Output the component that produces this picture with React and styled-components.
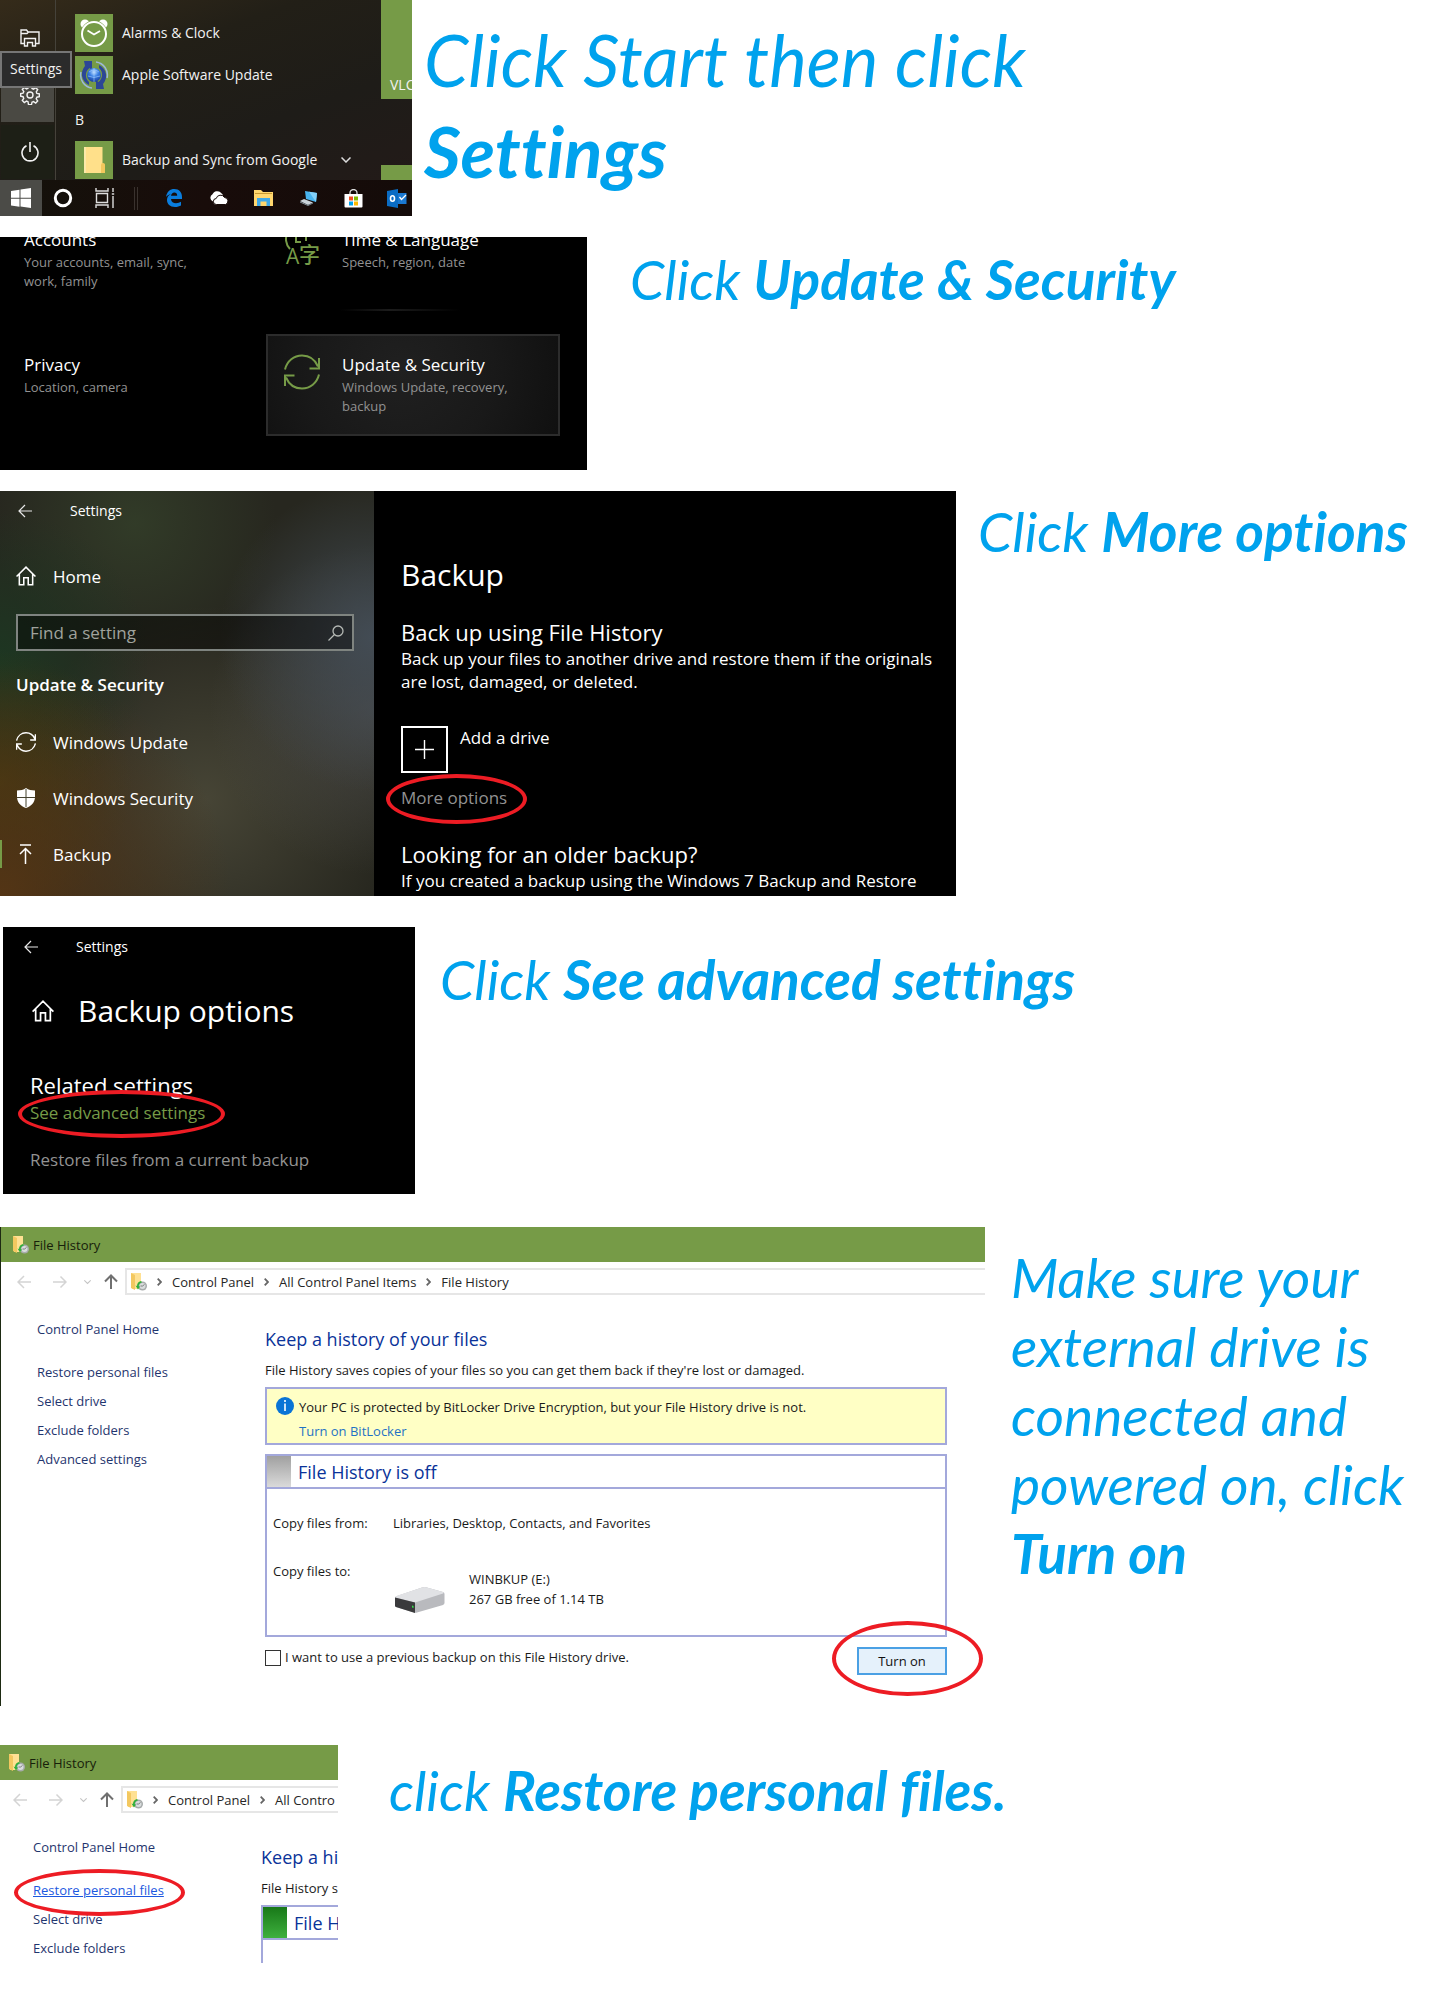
import React from 'react'
import styled, { createGlobalStyle, css } from 'styled-components'

const palette = {
    caption: '#00a2ed',
    ring: '#ed1c24',
    green: '#769b47',
    link: '#1f356e',
    heading: '#0a3399',
    frame: '#a3a8db',
    muted: '#929292',
}

const fonts = {
    ui: "'Open Sans', 'Noto Sans', sans-serif",
    caption: "Lato, 'Open Sans', sans-serif",
}

const GlobalStyle = createGlobalStyle`
    * {
        box-sizing: border-box;
    }
    body {
        margin: 0;
        background: #fff;
        font-family: ${fonts.ui};
    }
    h1, h2, h3, p, ul {
        margin: 0;
        padding: 0;
        font-weight: 400;
    }
    ul {
        list-style: none;
    }
    a {
        color: inherit;
        text-decoration: none;
    }
    button {
        font: inherit;
        color: inherit;
        background: none;
        border: 0;
        padding: 0;
    }
    svg {
        display: block;
        flex: none;
    }
`

/* ---------- page ---------- */

const Step = styled.section`
    display: grid;
    grid-template-columns: minmax(0, ${p => p.$shot}fr) minmax(0, ${p => 1444 - p.$shot}fr);
    align-items: start;
    margin-top: ${p => p.$gap || 0}px;
`
const Caption = styled.h2`
    padding: ${p => p.$top}px 0 0 ${p => p.$indent}px;
    color: ${palette.caption};
    font-family: ${fonts.caption};
    font-style: italic;
    font-size: ${p => (p.$large ? 71 : 55)}px;
    line-height: ${p => (p.$large ? 91 : 69)}px;
    font-variant-ligatures: none;

    b {
        font-weight: 700;
    }
`
const Circled = styled.span`
    position: relative;
    display: inline-block;
`
const Ring = styled.span`
    position: absolute;
    inset: ${p => p.$inset};
    border: 4px solid ${palette.ring};
    border-radius: 50%;
    pointer-events: none;
`

/* ---------- start menu ---------- */

const StartMenu = styled.div`
    overflow: hidden;
    color: #f2f2f2;
    font-size: 14px;
    line-height: 20px;
    white-space: nowrap;
    background: linear-gradient(160deg, #352b1a 0%, #221f17 30%, #1e1c18 60%, #241a18 100%);
`
const StartBody = styled.div`
    display: flex;
`
const Rail = styled.div`
    position: relative;
    width: 56px;
    padding-top: 11px;
    display: flex;
    flex-direction: column;
    gap: 3px;
    border-right: 1px solid #45423a;
`
const RailButton = styled.button`
    height: 54px;
    margin: 0 1px;
    display: flex;
    align-items: center;
    justify-content: center;
    padding-left: 5px;
    background: ${p => (p.$hover ? '#4a4943' : p.$dark ? '#1d1f16' : 'transparent')};
`
const Tooltip = styled.div`
    position: absolute;
    top: 51px;
    left: 0;
    width: 72px;
    padding: 6px 0 7px;
    text-align: center;
    background: #2b2b2b;
    border: 2px solid #767676;
`
const AppList = styled.ul`
    flex: 1;
    padding: 14px 0 1px 19px;
    display: flex;
    flex-direction: column;
    gap: 4px;
`
const AppRow = styled.li`
    display: flex;
    align-items: center;
    height: 38px;

    svg:last-child:not(:first-child) {
        margin-left: auto;
        margin-right: 30px;
    }
`
const Letter = styled.li`
    height: 39px;
    padding-top: 12px;
`
const AppTile = styled.span`
    width: 38px;
    height: 38px;
    margin-right: 9px;
    display: flex;
    align-items: center;
    justify-content: center;
    background: ${palette.green};
`
const LiveTiles = styled.div`
    width: 31px;
    display: flex;
    flex-direction: column;
    justify-content: space-between;
`
const LiveTile = styled.div`
    height: ${p => p.$height}px;
    padding: 0 0 4px 9px;
    display: flex;
    align-items: flex-end;
    overflow: hidden;
    background: ${palette.green};
`
const Taskbar = styled.div`
    height: 36px;
    display: flex;
    align-items: center;
    background: linear-gradient(90deg, #14120b, #180c0a 50%, #140b09);
`
const TaskButton = styled.button`
    flex: 0 0 ${p => p.$width}px;
    height: 36px;
    display: flex;
    align-items: center;
    justify-content: center;
    background: ${p => (p.$active ? '#4b4b47' : 'transparent')};
`
const TaskDivider = styled.span`
    flex: none;
    width: 4px;
    height: 23px;
    margin: 0 14px 0 8px;
    border: solid #3a322e;
    border-width: 0 1px;
`

/* ---------- settings home ---------- */

const SettingsHome = styled.div`
    display: grid;
    grid-template-columns: minmax(0, 266fr) minmax(0, 294fr);
    row-gap: 23px;
    padding: 0 27px 34px 0;
    overflow: hidden;
    background: #000;

    /* first row is scrolled halfway out of view */
    & > :nth-child(-n + 2) {
        margin-top: -28px;
    }
`
const Category = styled.a`
    display: flex;
    gap: 22px;
    min-height: 102px;
    padding: 18px 16px 18px ${p => (p.$plain ? 22 : 16)}px;
    border: 2px solid transparent;

    ${p => p.$trace && css`
        border-image: linear-gradient(90deg, transparent 25%, #1c1c1c 42%, transparent 66%) 2;
    `}
    ${p => p.$hover && css`
        border-color: #2c2c2c;
        background: radial-gradient(circle at 46% 35%, #202020, #191919 55%, #101010);
    `}
`
const CategoryTitle = styled.h3`
    color: #fff;
    font-size: 17px;
    font-weight: 500;
    line-height: 22px;
    white-space: nowrap;
`
const CategoryText = styled.p`
    max-width: 182px;
    margin-top: 2px;
    color: ${palette.muted};
    font-size: 13px;
    line-height: 19px;
`

/* ---------- settings windows ---------- */

const SettingsWindow = styled.div`
    display: grid;
    grid-template-columns: ${p => (p.$split ? 'minmax(0, 374fr) minmax(0, 582fr)' : 'minmax(0, 1fr)')};
    margin-left: ${p => p.$offset || 0}px;
    overflow: hidden;
    color: #fff;
    font-size: 17px;
    line-height: 23px;
    background: #000;
`
const Sidebar = styled.div`
    padding: 10px 20px 14px 16px;
    background:
        radial-gradient(circle at 0% 100%, rgba(88, 54, 20, .9), transparent 42%),
        radial-gradient(circle at 0% 72%, rgba(74, 60, 12, .7), transparent 28%),
        radial-gradient(circle at 0% 42%, rgba(28, 56, 34, .9), transparent 34%),
        radial-gradient(circle at 100% 36%, rgba(68, 78, 88, .9), transparent 34%),
        radial-gradient(circle at 100% 54%, rgba(80, 80, 80, .7), transparent 38%),
        radial-gradient(circle at 36% 8%, rgba(52, 64, 42, .8), transparent 32%),
        radial-gradient(circle at 55% 76%, rgba(74, 72, 56, .9), transparent 52%),
        #27271f;
`
const TitleRow = styled.div`
    display: flex;
    align-items: center;
    gap: 38px;
    padding-left: ${p => p.$indent}px;
    font-size: 14px;
    line-height: 20px;
`
const NavLink = styled.a`
    position: relative;
    display: flex;
    align-items: center;
    gap: 17px;
    height: 56px;

    &[aria-current]::before {
        content: '';
        position: absolute;
        left: -16px;
        width: 2px;
        height: 28px;
        background: ${palette.green};
    }
`
const HomeLink = styled(NavLink)`
    height: 24px;
    margin-top: 43px;
`
const SearchBox = styled.label`
    display: flex;
    align-items: center;
    height: 37px;
    margin-top: 26px;
    padding: 0 8px 0 12px;
    background: rgba(0, 0, 0, .42);
    border: 2px solid #7f8480;

    input {
        flex: 1;
        min-width: 0;
        padding: 0;
        color: #fff;
        font: inherit;
        background: none;
        border: 0;
        outline: 0;
    }
    input::placeholder {
        color: #a0a39d;
        opacity: 1;
    }
`
const SidebarHeading = styled.h3`
    margin: 22px 0 17px;
    font-size: 17px;
    font-weight: 600;
    line-height: 24px;
`
const BackupPane = styled.div`
    padding: 62px 24px 2px 27px;
    white-space: nowrap;
`
const PageTitle = styled.h1`
    font-size: 30px;
    font-weight: 400;
    line-height: 44px;
`
const SectionTitle = styled.h2`
    margin-top: ${p => p.$space}px;
    font-size: 22px;
    line-height: 28px;
`
const PaneText = styled.p`
    margin-top: 1px;
`
const AddDrive = styled.button`
    display: flex;
    gap: 12px;
    margin: 33px 0 13px;
    line-height: 23px;
`
const AddBox = styled.span`
    width: 47px;
    height: 47px;
    display: flex;
    align-items: center;
    justify-content: center;
    border: 2px solid #fff;
`
const PaneLink = styled.a`
    color: ${p => (p.$accent ? palette.green : palette.muted)};
`
const OptionsPane = styled.div`
    padding: 10px 0 23px;
`
const OptionsTitle = styled.div`
    display: flex;
    align-items: center;
    gap: 24px;
    margin-top: 32px;
    padding-left: 29px;
`
const OptionsBody = styled.div`
    display: flex;
    flex-direction: column;
    align-items: flex-start;
    gap: 2px;
    padding-left: 27px;

    & > :last-child {
        margin-top: 22px;
    }
`

/* ---------- file history ---------- */

const Window = styled.div`
    overflow: hidden;
    color: #1a1a1a;
    font-size: 13px;
    line-height: 20px;
    white-space: nowrap;
    background: #fff;
    border-left: ${p => (p.$edge ? '1px solid #1d2a12' : '0')};
    padding-bottom: ${p => p.$bottom || 0}px;
`
const TitleBar = styled.div`
    display: flex;
    align-items: center;
    gap: 4px;
    height: 35px;
    padding-left: ${p => p.$inset + 9}px;
    color: #16200a;
    background: ${palette.green};
`
const AddressRow = styled.div`
    display: flex;
    align-items: center;
    padding: 6px 0 0 ${p => p.$inset + 2}px;
`
const NavButton = styled.button`
    flex: 0 0 ${p => p.$width}px;
    display: flex;
    justify-content: center;
`
const AddressBar = styled.div`
    flex: 1;
    display: flex;
    align-items: center;
    height: 27px;
    padding-left: 4px;
    overflow: hidden;
    border: 2px solid #e6e6e6;
    border-right: 0;
`
const Crumb = styled.a`
    display: flex;
    align-items: center;
    gap: 10px;
    margin-left: 10px;
    color: #262626;
`
const Columns = styled.div`
    display: flex;
    padding-left: ${p => p.$inset}px;
`
const TaskList = styled.ul`
    flex: 0 0 261px;
    padding: 24px 0 0 33px;
    display: flex;
    flex-direction: column;
    gap: 9px;
    color: ${palette.link};

    li:first-child {
        margin-bottom: 14px;
    }
`
const ActiveTask = styled.a`
    color: #1c58e0;
    text-decoration: underline;
`
const Content = styled.div`
    flex: 1;
    min-width: 0;
    padding: 31px ${p => p.$right}px 0 0;
`
const ContentTitle = styled.h1`
    color: ${palette.heading};
    font-size: 18px;
    line-height: 26px;
`
const Intro = styled.p`
    margin: 8px 0 7px;
`
const Notice = styled.div`
    display: flex;
    gap: 5px;
    margin-bottom: 9px;
    padding: 8px 9px 2px;
    background: #ffffc5;
    border: 2px solid ${palette.frame};

    a {
        display: block;
        margin-top: 4px;
        color: #1f72c4;
    }
`
const StatusBox = styled.div`
    border: 2px solid ${palette.frame};
    ${p => p.$cropped && css`
        height: 58px;
        border-width: 2px 0 0 2px;
    `}
`
const StatusHeader = styled.div`
    display: flex;
    align-items: center;
    gap: 7px;
    height: 33px;
    border-bottom: 2px solid ${palette.frame};

    &::before {
        content: '';
        flex: none;
        width: 24px;
        height: 31px;
        background: ${p => (p.$on ? 'linear-gradient(#187818, #3eb03e)' : 'linear-gradient(#a0a0a0, #dadada)')};
    }
`
const StatusDetails = styled.div`
    display: grid;
    grid-template-columns: 120px 1fr;
    row-gap: 28px;
    padding: 24px 6px 26px;
`
const Target = styled.div`
    display: flex;
    gap: 24px;
    padding-top: 8px;

    svg {
        margin: 18px 0 -4px 2px;
    }
`
const ActionRow = styled.div`
    display: flex;
    justify-content: space-between;
    align-items: flex-start;
    margin-top: 10px;
`
const CheckLabel = styled.label`
    display: flex;
    align-items: center;
    gap: 4px;

    input {
        appearance: none;
        width: 16px;
        height: 16px;
        margin: 2px 0 0;
        background: #fff;
        border: 1px solid #333;
    }
`
const TurnOn = styled.button`
    display: block;
    width: 90px;
    height: 28px;
    color: #111;
    background: #e5f1fb;
    border: 2px solid #4ba0e4;
`

/* ---------- icons ---------- */

const Line = ({ w = 20, h = w, box = `0 0 ${w} ${h}`, stroke = 1.5, color = 'currentColor', children }) => (
    <svg width={w} height={h} viewBox={box} fill="none" stroke={color} strokeWidth={stroke} aria-hidden="true">
        {children}
    </svg>
)

const ExplorerIcon = () => (
    <Line w={20} h={18} stroke={1.4}>
        <path d="M4 14.500H1V1h5.500l1.500 2H19v11.500h-3M1 4.500h6l1.500-1.500M4.500 17V9.500h11V17h-3v-3.500h-5V17z" />
    </Line>
)
const GearIcon = () => (
    <Line w={20} stroke={1.4}>
        <circle cx="10" cy="10" r="3" />
        <path d="M8.500 1h3l.5 2.500 1.500.7 2.200-1.500 2 2-1.400 2.200.6 1.500 2.400.5v2.800l-2.400.5-.7 1.600 1.500 2.200-2 2-2.200-1.400-1.500.6-.5 2.400h-3L8 16.700l-1.500-.6-2.200 1.400-2-2 1.400-2.200-.6-1.600L.700 11.200V8.600L3.100 8.100l.7-1.500L2.300 4.400l2-2 2.200 1.500L8 3.200z" />
    </Line>
)
const PowerIcon = () => (
    <Line w={18} h={20} stroke={1.6}>
        <path d="M9 0v10M5.500 3.700a8 8 0 1 0 7 0" />
    </Line>
)
const ClockIcon = () => (
    <svg width="28" height="28" viewBox="0 0 28 28" aria-hidden="true">
        <circle cx="5" cy="5" r="4.500" fill="#fff" />
        <circle cx="23" cy="5" r="4.500" fill="#fff" />
        <circle cx="14" cy="15" r="12" fill={palette.green} stroke={palette.green} strokeWidth="3" />
        <circle cx="14" cy="15" r="12" fill="none" stroke="#fff" strokeWidth="2" />
        <path d="M7.500 11.500L14 15.500l6-3.500" fill="none" stroke="#fff" strokeWidth="1.800" />
    </svg>
)
const AppleUpdateIcon = () => (
    <svg width="30" height="30" viewBox="0 0 30 30" aria-hidden="true">
        <defs>
            <radialGradient id="globe" cx=".5" cy=".3" r=".7">
                <stop offset="0" stopColor="#c4e2ff" />
                <stop offset=".45" stopColor="#3a80e4" />
                <stop offset="1" stopColor="#1a3f9c" />
            </radialGradient>
        </defs>
        <path d="M10 25A12 12 0 0 1 6 6L5 1h8v9l-2.500-2a9 9 0 0 0-.5 14z" fill="#2c4696" />
        <path d="M20 5a12 12 0 0 1 4 19l1 5h-8v-9l2.500 2A9 9 0 0 0 20 8z" fill="#2c4696" />
        <path d="M13 28A13 13 0 0 1 2 12M17 2a13 13 0 0 1 11 16" fill="none" stroke="#9db8d8" strokeWidth="1.500" />
        <circle cx="15" cy="15" r="7" fill="url(#globe)" />
        <path d="M10 12q5-4 10 0M9 16q6 3 12 0M15 8v14" fill="none" stroke="#a8d0ff" strokeWidth=".600" />
    </svg>
)
const FolderIcon = () => (
    <svg width="21" height="26" viewBox="0 0 21 26" aria-hidden="true">
        <path d="M0 0h18.500v16l2.500 2v8H0z" fill="#ffe08a" />
        <path d="M0 0h2v26H0z" fill="#fbe9a8" />
        <path d="M17 26v-8q0-2 2-2t2 2v8z" fill="#f2c75c" />
    </svg>
)
const ChevronDown = ({ w = 10, color = '#ddd' }) => (
    <Line w={w} h={6} box="0 0 10 6" color={color}><path d="M.5.5L5 5 9.500.5" /></Line>
)
const WindowsIcon = () => (
    <svg width="20" height="20" viewBox="0 0 20 20" fill="#fff" aria-hidden="true">
        <path d="M0 3l8.500-1.300v8H0zM9.500 1.500L20 0v9.700H9.500zM0 10.700h8.500v8L0 17.400zM9.500 10.700H20V20l-10.500-1.400z" />
    </svg>
)
const CortanaIcon = () => <Line w={20} stroke={3} color="#fff"><circle cx="10" cy="10" r="7.700" /></Line>
const TaskViewIcon = () => (
    <Line w={20} h={20} stroke={1.4} color="#ddd">
        <path d="M1 0v3h12V0M1 20v-3h12v3M1.500 5.500h11v9h-11zM18 0v4M18 8v12M16.800 6h2.400" />
    </Line>
)
const EdgeIcon = () => (
    <svg width="18" height="18" viewBox="0 0 18 18" aria-hidden="true">
        <path d="M1 8C2 2.500 5 0 9.300 0 14.200 0 17 3.400 17 8v2H6c.2 3 2.400 4.200 5 4.200 2 0 3.600-.5 5-1.400v3.700c-1.500.9-3.600 1.500-6 1.500-5 0-8-3-8-7 0-2.800 1.500-5 4-6.300C3.600 5.500 2 6.500 1 8zm5-1.200h6.200C12.200 4.600 11 3.500 9.300 3.500S6.300 4.800 6 6.800z" fill="#0a7ddd" />
    </svg>
)
const CloudIcon = () => (
    <svg width="20" height="14" viewBox="0 0 20 14" aria-hidden="true">
        <path d="M4 10.500a4 4 0 0 1-.5-7.300A5 5 0 0 1 12 2a4 4 0 0 1 2 2.500z" fill="#fff" />
        <path d="M7.500 13.500a3 3 0 0 1-.3-6A4.500 4.500 0 0 1 15.500 6.500a3.600 3.600 0 0 1 1 7z" fill="#fff" stroke="#180c0a" strokeWidth="1" />
    </svg>
)
const TaskFolderIcon = () => (
    <svg width="19" height="16" viewBox="0 0 19 16" aria-hidden="true">
        <path d="M0 0h7l2 2h10v14H0z" fill="#ffd76e" />
        <path d="M1 3.500h17" stroke="#b98a25" strokeWidth=".800" />
        <path d="M3 16V8h13v8h-3.500v-4.500h-6V16z" fill="#3fa9e8" />
    </svg>
)
const ComputerIcon = () => (
    <svg width="19" height="17" viewBox="0 0 19 17" aria-hidden="true">
        <path d="M6 1l12 2-1 9-10-3z" fill="#48b4f0" />
        <path d="M10 1.700L18 3l-1 9z" fill="#83d0fa" />
        <path d="M1 11l4-2 9 3.500L9 15z" fill="#c9d3da" />
        <path d="M1 12l8 3.500 5-2.500" fill="none" stroke="#7c8b95" />
    </svg>
)
const StoreIcon = () => (
    <svg width="19" height="19" viewBox="0 0 19 19" aria-hidden="true">
        <path d="M6 6V4a3.500 3.500 0 0 1 7 0v2" fill="none" stroke="#ddd" strokeWidth="1.300" />
        <path d="M.5 5h18v12.500q0 1-1 1h-16q-1 0-1-1z" fill="#fff" />
        <path d="M5 7.500h4v4H5z" fill="#f04e23" />
        <path d="M10 7.500h4v4h-4z" fill="#7fba00" />
        <path d="M5 12.500h4v4H5z" fill="#00a4ef" />
        <path d="M10 12.500h4v4h-4z" fill="#ffb900" />
    </svg>
)
const OutlookIcon = () => (
    <svg width="20" height="19" viewBox="0 0 20 19" aria-hidden="true">
        <path d="M10 4h9.500v11H10z" fill="#1a78d0" />
        <path d="M12.500 8l2 2.500L19 6" fill="none" stroke="#fff" strokeWidth="1.300" />
        <path d="M0 2l11-2v19L0 17z" fill="#0a6cc4" />
        <ellipse cx="5.500" cy="9.500" rx="2" ry="2.700" fill="none" stroke="#fff" strokeWidth="1.600" />
    </svg>
)
const LanguageIcon = () => (
    <svg width="36" height="36" viewBox="0 0 36 36" fill={palette.green} aria-hidden="true">
        <path d="M6 20A14 14 0 0 1 4 3M12 7v6h5M22 8v4" fill="none" stroke={palette.green} strokeWidth="2" />
        <text x="2" y="35" fontSize="21" fontWeight="500" fontFamily="Open Sans, sans-serif">A</text>
        <text x="15" y="33" fontSize="21" fontWeight="500" fontFamily="Noto Sans CJK SC, sans-serif">字</text>
    </svg>
)
const SyncIcon = ({ size = 36, color = palette.green }) => (
    <Line w={size} box="0 0 36 36" stroke={size > 30 ? 2 : 2.6} color={color}>
        <path d="M1 15.500C3 7 10 1.500 18 1.500c7 0 13 4 16 11M35 4v10.500H25.500M35 20.500C33 29 26 34.500 18 34.500c-7 0-13-4-16-11M1 32V21.500h9.500" />
    </Line>
)
const BackIcon = ({ color = '#e8e8e8', stroke = 1.2 }) => (
    <Line w={14} h={14} color={color} stroke={stroke}><path d="M14 7H1M7 1L1 7l6 6" /></Line>
)
const ForwardIcon = () => (
    <Line w={14} h={14} color="#d4d4d4"><path d="M0 7h13M7.500 1.500L13 7l-5.500 5.500" /></Line>
)
const UpIcon = () => (
    <Line w={14} h={15} color="#707070" stroke={2}><path d="M7 15V1.500M1 7.500l6-6 6 6" /></Line>
)
const HomeIcon = ({ size = 18 }) => (
    <Line w={size} box="0 0 18 18" stroke={1.4}>
        <path d="M.5 9.500L9 1l8.500 8.500M3 7.500v9.300h4v-6.300h4v6.300h4V7.500" />
    </Line>
)
const SearchIcon = () => (
    <Line w={16} color="#b5b9b5" stroke={1.3}><circle cx="10" cy="6" r="5" /><path d="M6.500 9.500L.5 15.500" /></Line>
)
const ShieldIcon = () => (
    <svg width="20" height="20" viewBox="0 0 20 20" aria-hidden="true">
        <path d="M10 0c2.500 1.800 5.500 2.500 9 2.500V9c0 5-3.500 9-9 11C4.500 18 1 14 1 9V2.500C4.500 2.500 7.500 1.800 10 0z" fill="#fff" />
        <path d="M10 1v18M1 9.500h18" stroke="#45422f" strokeWidth="1" />
    </svg>
)
const UploadIcon = () => (
    <Line w={20} h={20}><path d="M4 1h11M9.500 20V5M4 10l5.500-5.500L15 10" /></Line>
)
const PlusIcon = () => <Line w={19} stroke={1.4}><path d="M9.500 0v19M0 9.500h19" /></Line>
const HistoryIcon = () => (
    <svg width="16" height="18" viewBox="0 0 16 18" aria-hidden="true">
        <path d="M0 0h10v8l2 3v5H1z" fill="#ffe193" />
        <path d="M0 0l4 2v15l-4-2z" fill="#f3c860" />
        <circle cx="11.500" cy="13" r="4.500" fill="#a7abab" />
        <circle cx="11.500" cy="13" r="3" fill="#d9dddd" />
        <path d="M11.500 13l2-1.500M11.500 13h-2" stroke="#666" strokeWidth=".800" />
        <path d="M10 8q-4 1-4 5l-1.500-.5L7 16.500l2-3-1.300-.3q0-3 3.300-4z" fill="#2fae3c" />
    </svg>
)
const ChevronRight = () => <Line w={5} h={8} color="#666" stroke={1.8}><path d="M.7.7L4 4 .7 7.300" /></Line>
const InfoIcon = () => (
    <svg width="18" height="18" viewBox="0 0 18 18" aria-hidden="true">
        <circle cx="9" cy="9" r="9" fill="#0a74d6" />
        <path d="M9 3v2M9 6.500V14" stroke="#fff" strokeWidth="1.600" />
    </svg>
)
const DriveIcon = () => (
    <svg width="50" height="26" viewBox="0 0 50 26" aria-hidden="true">
        <path d="M0 11q0-1 2-2L27 .5q2-.8 4-.3L48 5q1.500.5 1.500 2v9q0 1-1.500 2L22 25.500q-1.500.5-3 0L1 20q-1-.5-1-1.500z" fill="#b9babe" />
        <path d="M0 10.500q0-1 2-1.700L27 .5q2-.8 4-.3L48 5q1.500.8 0 1.500L20 15.500z" fill="#e1e2e5" />
        <path d="M0 10.500l20 5V26L1 20q-1-.5-1-1.500z" fill="#3a3a3c" />
        <path d="M17 18.500l1.500.4v2l-1.500-.4z" fill="#35e04a" />
    </svg>
)

/* ---------- sections ---------- */

const StartMenuShot = () => (
    <StartMenu>
        <StartBody>
            <Rail>
                <RailButton aria-label="File Explorer"><ExplorerIcon /></RailButton>
                <RailButton aria-label="Settings" $hover><GearIcon /></RailButton>
                <RailButton aria-label="Power" $dark><PowerIcon /></RailButton>
                <Tooltip>Settings</Tooltip>
            </Rail>
            <AppList>
                <AppRow><AppTile><ClockIcon /></AppTile>Alarms &amp; Clock</AppRow>
                <AppRow><AppTile><AppleUpdateIcon /></AppTile>Apple Software Update</AppRow>
                <Letter>B</Letter>
                <AppRow><AppTile><FolderIcon /></AppTile>Backup and Sync from Google<ChevronDown /></AppRow>
            </AppList>
            <LiveTiles>
                <LiveTile $height={99}>VLC</LiveTile>
                <LiveTile $height={15} />
            </LiveTiles>
        </StartBody>
        <Taskbar>
            <TaskButton $width={42} $active aria-label="Start"><WindowsIcon /></TaskButton>
            <TaskButton $width={42} aria-label="Cortana"><CortanaIcon /></TaskButton>
            <TaskButton $width={42} aria-label="Task View"><TaskViewIcon /></TaskButton>
            <TaskDivider />
            <TaskButton $width={44} aria-label="Edge"><EdgeIcon /></TaskButton>
            <TaskButton $width={45} aria-label="OneDrive"><CloudIcon /></TaskButton>
            <TaskButton $width={45} aria-label="Files"><TaskFolderIcon /></TaskButton>
            <TaskButton $width={45} aria-label="Computer"><ComputerIcon /></TaskButton>
            <TaskButton $width={44} aria-label="Store"><StoreIcon /></TaskButton>
            <TaskButton $width={44} aria-label="Outlook"><OutlookIcon /></TaskButton>
        </Taskbar>
    </StartMenu>
)

const CategoryItem = ({ icon, title, text, ...rest }) => (
    <Category href="#" {...rest}>
        {icon}
        <div>
            <CategoryTitle>{title}</CategoryTitle>
            <CategoryText>{text}</CategoryText>
        </div>
    </Category>
)

const SettingsHomeShot = () => (
    <SettingsHome>
        <CategoryItem $plain title="Accounts" text="Your accounts, email, sync, work, family" />
        <CategoryItem $trace icon={<LanguageIcon />} title="Time & Language" text="Speech, region, date" />
        <CategoryItem $plain title="Privacy" text="Location, camera" />
        <CategoryItem $hover icon={<SyncIcon />} title="Update & Security" text="Windows Update, recovery, backup" />
    </SettingsHome>
)

const BackupShot = () => (
    <SettingsWindow $split>
        <Sidebar>
            <TitleRow $indent={2}><BackIcon />Settings</TitleRow>
            <HomeLink href="#"><HomeIcon size={20} />Home</HomeLink>
            <SearchBox>
                <input type="text" placeholder="Find a setting" aria-label="Find a setting" />
                <SearchIcon />
            </SearchBox>
            <SidebarHeading>Update &amp; Security</SidebarHeading>
            <NavLink href="#"><SyncIcon size={20} color="#fff" />Windows Update</NavLink>
            <NavLink href="#"><ShieldIcon />Windows Security</NavLink>
            <NavLink href="#" aria-current="page"><UploadIcon />Backup</NavLink>
        </Sidebar>
        <BackupPane>
            <PageTitle>Backup</PageTitle>
            <SectionTitle $space={21}>Back up using File History</SectionTitle>
            <PaneText>
                Back up your files to another drive and restore them if the originals<br />
                are lost, damaged, or deleted.
            </PaneText>
            <AddDrive><AddBox><PlusIcon /></AddBox>Add a drive</AddDrive>
            <Circled>
                <PaneLink href="#">More options</PaneLink>
                <Ring $inset="-12px -20px -15px -15px" />
            </Circled>
            <SectionTitle $space={31}>Looking for an older backup?</SectionTitle>
            <PaneText>If you created a backup using the Windows 7 Backup and Restore</PaneText>
        </BackupPane>
    </SettingsWindow>
)

const BackupOptionsShot = () => (
    <SettingsWindow $offset={3}>
        <OptionsPane>
            <TitleRow $indent={21}><BackIcon />Settings</TitleRow>
            <OptionsTitle>
                <HomeIcon size={22} />
                <PageTitle>Backup options</PageTitle>
            </OptionsTitle>
            <OptionsBody>
                <SectionTitle $space={38}>Related settings</SectionTitle>
                <Circled>
                    <PaneLink href="#" $accent>See advanced settings</PaneLink>
                    <Ring $inset="-11px -20px -14px -12px" />
                </Circled>
                <PaneLink href="#">Restore files from a current backup</PaneLink>
            </OptionsBody>
        </OptionsPane>
    </SettingsWindow>
)

const WindowTop = ({ inset, crumbs }) => (
    <>
        <TitleBar $inset={inset}><HistoryIcon />File History</TitleBar>
        <AddressRow $inset={inset}>
            <NavButton $width={36} aria-label="Back"><BackIcon color="#d4d4d4" stroke={1.5} /></NavButton>
            <NavButton $width={36} aria-label="Forward"><ForwardIcon /></NavButton>
            <NavButton $width={18} aria-label="Recent locations"><ChevronDown w={7} color="#c4c4c4" /></NavButton>
            <NavButton $width={29} aria-label="Up"><UpIcon /></NavButton>
            <AddressBar>
                <HistoryIcon />
                {crumbs.map(name => <Crumb href="#" key={name}><ChevronRight />{name}</Crumb>)}
            </AddressBar>
        </AddressRow>
    </>
)

const crumbs = ['Control Panel', 'All Control Panel Items', 'File History']

const FileHistoryShot = () => (
    <Window $edge $bottom={31}>
        <WindowTop inset={3} crumbs={crumbs} />
        <Columns $inset={3}>
            <TaskList>
                <li><a href="#">Control Panel Home</a></li>
                <li><a href="#">Restore personal files</a></li>
                <li><a href="#">Select drive</a></li>
                <li><a href="#">Exclude folders</a></li>
                <li><a href="#">Advanced settings</a></li>
            </TaskList>
            <Content $right={38}>
                <ContentTitle>Keep a history of your files</ContentTitle>
                <Intro>File History saves copies of your files so you can get them back if they're lost or damaged.</Intro>
                <Notice>
                    <InfoIcon />
                    <div>
                        Your PC is protected by BitLocker Drive Encryption, but your File History drive is not.
                        <a href="#">Turn on BitLocker</a>
                    </div>
                </Notice>
                <StatusBox>
                    <StatusHeader><ContentTitle as="h2">File History is off</ContentTitle></StatusHeader>
                    <StatusDetails>
                        <span>Copy files from:</span>
                        <span>Libraries, Desktop, Contacts, and Favorites</span>
                        <span>Copy files to:</span>
                        <Target>
                            <DriveIcon />
                            <div>WINBKUP (E:)<br />267 GB free of 1.14 TB</div>
                        </Target>
                    </StatusDetails>
                </StatusBox>
                <ActionRow>
                    <CheckLabel>
                        <input type="checkbox" />
                        I want to use a previous backup on this File History drive.
                    </CheckLabel>
                    <Circled>
                        <TurnOn>Turn on</TurnOn>
                        <Ring $inset="-26px -36px -21px -25px" />
                    </Circled>
                </ActionRow>
            </Content>
        </Columns>
    </Window>
)

const RestoreShot = () => (
    <Window>
        <WindowTop inset={0} crumbs={['Control Panel', 'All Contro']} />
        <Columns $inset={0}>
            <TaskList>
                <li><a href="#">Control Panel Home</a></li>
                <li>
                    <Circled>
                        <ActiveTask href="#">Restore personal files</ActiveTask>
                        <Ring $inset="-11px -21px -16px -19px" />
                    </Circled>
                </li>
                <li><a href="#">Select drive</a></li>
                <li><a href="#">Exclude folders</a></li>
            </TaskList>
            <Content $right={0}>
                <ContentTitle>Keep a hi</ContentTitle>
                <Intro>File History s</Intro>
                <StatusBox $cropped>
                    <StatusHeader $on><ContentTitle as="h2">File H</ContentTitle></StatusHeader>
                </StatusBox>
            </Content>
        </Columns>
    </Window>
)

const App = () => (
    <main>
        <GlobalStyle />
        <Step $shot={412}>
            <StartMenuShot />
            <Caption $large $top={14} $indent={12}>Click Start then click<br /><b>Settings</b></Caption>
        </Step>
        <Step $shot={587} $gap={21}>
            <SettingsHomeShot />
            <Caption $top={8} $indent={43}>Click <b>Update &amp; Security</b></Caption>
        </Step>
        <Step $shot={956} $gap={21}>
            <BackupShot />
            <Caption $top={6} $indent={22}>Click <b>More options</b></Caption>
        </Step>
        <Step $shot={415} $gap={31}>
            <BackupOptionsShot />
            <Caption $top={18} $indent={25}>Click <b>See advanced settings</b></Caption>
        </Step>
        <Step $shot={985} $gap={33}>
            <FileHistoryShot />
            <Caption $top={16} $indent={26}>
                Make sure your<br />external drive is<br />connected and<br />powered on, click<br /><b>Turn on</b>
            </Caption>
        </Step>
        <Step $shot={338} $gap={39}>
            <RestoreShot />
            <Caption $top={11} $indent={51}>click <b>Restore personal files.</b></Caption>
        </Step>
    </main>
)

export default App
